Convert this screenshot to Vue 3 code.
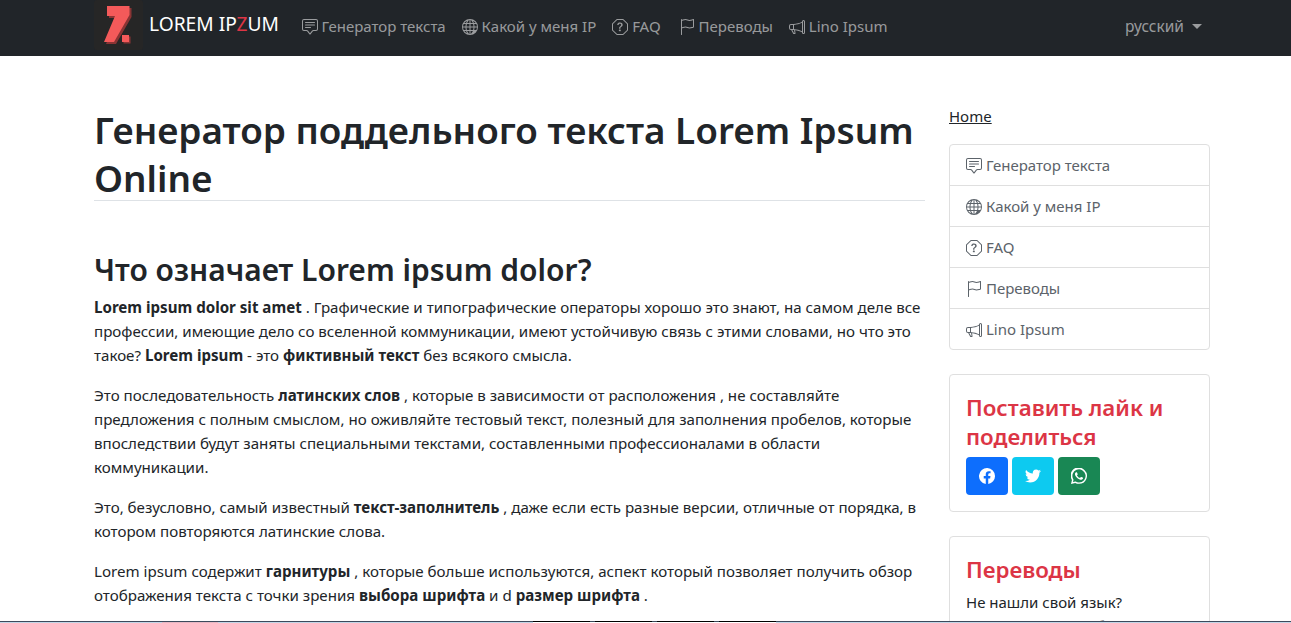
<template>
  <div class="page">
    <nav class="navbar">
      <div class="nav-in">
        <a class="brand">
          <span class="logo">
            <svg width="49" height="50" viewBox="0 0 49 50">
              <rect width="49" height="50" rx="3" fill="#262626" />
              <path d="M13 6h22.5v9L20 42H10l11-26h-8z" fill="#8a3434" transform="translate(2 2)" />
              <path d="M13 6h22.5v9L20 42H10l11-26h-8z" fill="#f45a5a" />
              <rect x="28" y="35" width="7" height="7" fill="#8a3434" transform="translate(1.5 1.5)" />
              <rect x="28" y="35" width="7" height="7" fill="#f45a5a" />
            </svg>
          </span>
          <span class="brand-text">LOREM IP<span class="z">Z</span>UM</span>
        </a>
        <ul class="menu">
          <li v-for="item in menu" :key="item.label">
            <a>
              <svg class="ico" viewBox="0 0 16 16" fill="currentColor"><path :d="item.icon" /><path v-if="item.icon2" :d="item.icon2" /></svg>
              {{ item.label }}
            </a>
          </li>
        </ul>
        <a class="lang">русский<span class="caret"></span></a>
      </div>
    </nav>

    <div class="container">
      <main class="content">
        <h1>Генератор поддельного текста Lorem Ipsum Online</h1>
        <h2>Что означает Lorem ipsum dolor?</h2>
        <p><strong>Lorem ipsum dolor sit amet</strong> . Графические и типографические операторы хорошо это знают, на самом деле все профессии, имеющие дело со вселенной коммуникации, имеют устойчивую связь с этими словами, но что это такое? <strong>Lorem ipsum</strong> - это <strong>фиктивный текст</strong> без всякого смысла.</p>
        <p>Это последовательность <strong>латинских слов</strong> , которые в зависимости от расположения , не составляйте предложения с полным смыслом, но оживляйте тестовый текст, полезный для заполнения пробелов, которые впоследствии будут заняты специальными текстами, составленными профессионалами в области коммуникации.</p>
        <p>Это, безусловно, самый известный <strong>текст-заполнитель</strong> , даже если есть разные версии, отличные от порядка, в котором повторяются латинские слова.</p>
        <p>Lorem ipsum содержит <strong>гарнитуры</strong> , которые больше используются, аспект который позволяет получить обзор отображения текста с точки зрения <strong>выбора шрифта</strong> и d <strong>размер шрифта</strong> .</p>
      </main>

      <aside class="side">
        <a class="home">Home</a>
        <ul class="list">
          <li v-for="item in menu" :key="item.label">
            <svg class="ico" viewBox="0 0 16 16" fill="currentColor"><path :d="item.icon" /><path v-if="item.icon2" :d="item.icon2" /></svg>
            {{ item.label }}
          </li>
        </ul>
        <section class="card">
          <h3>Поставить лайк и поделиться</h3>
          <div class="shares">
            <a class="btn fb">
              <svg width="16" height="16" viewBox="0 0 16 16" fill="#fff"><path d="M16 8.05A8 8 0 1 0 6.75 16v-5.62H4.72V8.05h2.03V6.3c0-2 1.2-3.12 3.02-3.12.88 0 1.8.16 1.8.16v1.97h-1c-1 0-1.31.62-1.31 1.26v1.5h2.22l-.35 2.31H9.25V16A8 8 0 0 0 16 8.05z" /></svg>
            </a>
            <a class="btn tw">
              <svg width="16" height="16" viewBox="0 0 16 16" fill="#fff"><path d="M5.03 14.5c6.04 0 9.34-5 9.34-9.34 0-.14 0-.28-.01-.42A6.7 6.7 0 0 0 16 3.04a6.5 6.5 0 0 1-1.89.52 3.3 3.3 0 0 0 1.45-1.82 6.6 6.6 0 0 1-2.08.8 3.28 3.28 0 0 0-5.6 3A9.3 9.3 0 0 1 1.11 2.1a3.28 3.28 0 0 0 1.02 4.38A3.3 3.3 0 0 1 .64 6.07v.04a3.28 3.28 0 0 0 2.63 3.22 3.3 3.3 0 0 1-1.48.06 3.29 3.29 0 0 0 3.07 2.28A6.6 6.6 0 0 1 0 13.03a9.3 9.3 0 0 0 5.03 1.47z" /></svg>
            </a>
            <a class="btn wa">
              <svg width="16" height="16" viewBox="0 0 16 16" fill="#fff"><path d="M13.6 2.33A7.93 7.93 0 0 0 .96 11.89L0 16l4.2-1.1a7.9 7.9 0 0 0 3.79.96A7.93 7.93 0 0 0 13.6 2.33zM8 14.53a6.6 6.6 0 0 1-3.36-.92l-.24-.14-2.49.65.66-2.43-.16-.25A6.6 6.6 0 1 1 8 14.53zm3.62-4.94c-.2-.1-1.17-.58-1.35-.64-.18-.07-.31-.1-.45.1-.13.2-.51.64-.62.77-.12.13-.23.15-.43.05-.2-.1-.84-.31-1.6-.99a6 6 0 0 1-1.1-1.37c-.12-.2-.01-.3.09-.4l.3-.35c.1-.12.13-.2.2-.33.06-.13.03-.25-.02-.35-.05-.1-.45-1.08-.61-1.48-.16-.39-.33-.33-.45-.34h-.38a.73.73 0 0 0-.53.25c-.18.2-.7.68-.7 1.66s.72 1.93.82 2.06c.1.13 1.4 2.14 3.4 3 .47.2.84.33 1.13.42.48.15.91.13 1.25.08.38-.06 1.17-.48 1.34-.94.16-.46.16-.86.11-.94-.05-.08-.18-.13-.38-.23z" /></svg>
            </a>
          </div>
        </section>
        <section class="card">
          <h3>Переводы</h3>
          <p class="note">Не нашли свой язык?</p>
          <p class="note">Помогите нам, добавив его</p>
        </section>
      </aside>
    </div>
    <div class="strip"></div>
  </div>
</template>

<script setup>
  const menu = [
    {
      label: 'Генератор текста',
      icon: 'M14 1a1 1 0 0 1 1 1v8a1 1 0 0 1-1 1h-2.5a2 2 0 0 0-1.6.8L8 14.333 6.1 11.8a2 2 0 0 0-1.6-.8H2a1 1 0 0 1-1-1V2a1 1 0 0 1 1-1h12zM2 0a2 2 0 0 0-2 2v8a2 2 0 0 0 2 2h2.5a1 1 0 0 1 .8.4l1.9 2.533a1 1 0 0 0 1.6 0l1.9-2.533a1 1 0 0 1 .8-.4H14a2 2 0 0 0 2-2V2a2 2 0 0 0-2-2H2z',
      icon2: 'M3 3.5a.5.5 0 0 1 .5-.5h9a.5.5 0 0 1 0 1h-9a.5.5 0 0 1-.5-.5zM3 6a.5.5 0 0 1 .5-.5h9a.5.5 0 0 1 0 1h-9A.5.5 0 0 1 3 6zm0 2.5a.5.5 0 0 1 .5-.5h5a.5.5 0 0 1 0 1h-5a.5.5 0 0 1-.5-.5z',
    },
    {
      label: 'Какой у меня IP',
      icon: 'M0 8a8 8 0 1 1 16 0A8 8 0 0 1 0 8zm7.5-6.92c-.67.2-1.34.82-1.89 1.85-.18.34-.35.71-.49 1.07H7.5V1.08zM4.09 4a9.3 9.3 0 0 1 .64-1.54 6.3 6.3 0 0 1 .4-.66A7 7 0 0 0 2.25 4h1.84zm-.58 3.5c.03-.88.14-1.72.31-2.5H1.67a6.96 6.96 0 0 0-.65 2.5h2.49zM4.85 5c-.2.76-.32 1.6-.35 2.5h3V5H4.85zM8.5 5v2.5h3c-.03-.9-.15-1.74-.35-2.5H8.5zM4.5 8.5c.03.9.15 1.74.35 2.5H7.5V8.5h-3zm4 0V11h2.65c.2-.76.32-1.6.35-2.5h-3zM5.12 12c.14.36.31.73.49 1.07.55 1.03 1.22 1.65 1.89 1.85V12H5.12zm.01 2.2a6.3 6.3 0 0 1-.4-.66A9.3 9.3 0 0 1 4.09 12H2.25a7 7 0 0 0 2.88 2.2zM3.82 11a13.6 13.6 0 0 1-.31-2.5H1.02c.06.89.28 1.73.65 2.5h2.15zm7.05 3.2c.14-.21.28-.43.4-.66.26-.48.47-1 .64-1.54h1.84a7 7 0 0 1-2.88 2.2zM8.5 12v2.92c.67-.2 1.34-.82 1.89-1.85.18-.34.35-.71.49-1.07H8.5zm3.68-1h2.15c.37-.77.59-1.61.65-2.5h-2.49a13.6 13.6 0 0 1-.31 2.5zm2.8-3.5a6.96 6.96 0 0 0-.65-2.5h-2.15c.17.78.28 1.62.31 2.5h2.49zM11.27 2.46c.26.48.47 1 .64 1.54h1.84a7 7 0 0 0-2.88-2.2c.14.21.28.43.4.66zM10.88 4a8 8 0 0 0-.49-1.07C9.84 1.9 9.17 1.28 8.5 1.08V4h2.38z',
    },
    {
      label: 'FAQ',
      icon: 'M4.54.146A.5.5 0 0 1 4.893 0h6.214a.5.5 0 0 1 .353.146l4.394 4.394a.5.5 0 0 1 .146.353v6.214a.5.5 0 0 1-.146.353l-4.394 4.394a.5.5 0 0 1-.353.146H4.893a.5.5 0 0 1-.353-.146L.146 11.46A.5.5 0 0 1 0 11.107V4.893a.5.5 0 0 1 .146-.353L4.54.146zM5.1 1 1 5.1v5.8L5.1 15h5.8l4.1-4.1V5.1L10.9 1H5.1z',
      icon2: 'M5.255 5.786a.237.237 0 0 0 .241.247h.825c.138 0 .248-.113.266-.25.09-.656.54-1.134 1.342-1.134.686 0 1.314.343 1.314 1.168 0 .635-.374.927-.965 1.371-.673.489-1.206 1.06-1.168 1.987l.003.217a.25.25 0 0 0 .25.246h.811a.25.25 0 0 0 .25-.25v-.105c0-.718.273-.927 1.01-1.486.609-.463 1.244-.977 1.244-2.056 0-1.511-1.276-2.241-2.673-2.241-1.267 0-2.655.59-2.75 2.286zm1.557 5.763c0 .533.425.927 1.01.927.609 0 1.028-.394 1.028-.927 0-.552-.42-.94-1.029-.94-.584 0-1.009.388-1.009.94z',
    },
    {
      label: 'Переводы',
      icon: 'M14.778.085A.5.5 0 0 1 15 .5V8a.5.5 0 0 1-.314.464L14.5 8l.186.464-.003.001-.006.003-.023.009a12.435 12.435 0 0 1-.397.15c-.264.095-.631.223-1.047.35-.816.252-1.879.523-2.71.523-.847 0-1.548-.28-2.158-.525l-.028-.01C7.68 8.71 7.14 8.5 6.5 8.5c-.7 0-1.638.23-2.437.477A19.626 19.626 0 0 0 3 9.342V15.5a.5.5 0 0 1-1 0V.5a.5.5 0 0 1 1 0v.282c.226-.079.496-.17.79-.26C4.606.272 5.67 0 6.5 0c.84 0 1.524.277 2.121.519l.043.018C9.286.788 9.828 1 10.5 1c.7 0 1.638-.23 2.437-.477a19.587 19.587 0 0 0 1.349-.476l.019-.007.004-.002h.001M14 1.221c-.22.078-.48.167-.766.255-.81.252-1.872.523-2.734.523-.886 0-1.592-.286-2.203-.534l-.008-.003C7.662 1.21 7.139 1 6.5 1c-.669 0-1.606.229-2.415.478A21.294 21.294 0 0 0 3 1.845v6.433c.22-.078.48-.167.766-.255C4.576 7.77 5.638 7.5 6.5 7.5c.847 0 1.548.28 2.158.525l.028.01C9.32 8.29 9.86 8.5 10.5 8.5c.668 0 1.606-.229 2.415-.478A21.317 21.317 0 0 0 14 7.655V1.222z',
    },
    {
      label: 'Lino Ipsum',
      icon: 'M13 2.5a1.5 1.5 0 0 1 3 0v11a1.5 1.5 0 0 1-3 0v-.214c-2.162-1.241-4.49-1.843-6.912-2.083l.405 2.712A1 1 0 0 1 5.51 15.1h-.548a1 1 0 0 1-.916-.599l-1.85-3.49a68.14 68.14 0 0 0-.202-.003A2.014 2.014 0 0 1 0 9V7a2.02 2.02 0 0 1 1.992-2.013 74.663 74.663 0 0 0 2.483-.075c3.043-.154 6.148-.849 8.525-2.199V2.5zm1 0v11a.5.5 0 0 0 1 0v-11a.5.5 0 0 0-1 0zm-1 1.35c-2.344 1.205-5.209 1.842-8 2.033v4.233c.18.01.359.022.537.036 2.568.189 5.093.744 7.463 1.993V3.85zm-9 6.215v-4.13a95.09 95.09 0 0 1-1.992.052A1.02 1.02 0 0 0 1 7v2c0 .55.448 1.002 1.006 1.009A60.49 60.49 0 0 1 4 10.065zm-.657.975 1.609 3.037.01.024h.548l-.002-.014-.443-2.966a68.019 68.019 0 0 0-1.722-.082z',
    },
  ]
</script>

<style>
  html, body {
    margin: 0;
    height: 623px;
    overflow: hidden;
    background: #fff;
  }
</style>

<style scoped>
  .page {
    font-family: "Noto Sans", "Open Sans", sans-serif;
    color: #212529;
    font-size: 16px;
    line-height: 1.5;
    height: 623px;
    overflow: hidden;
    position: relative;
  }

  .navbar {
    background: #212529;
    height: 56px;
    overflow: hidden;
  }

  .nav-in {
    width: 1116px;
    margin-left: 94px;
    height: 56px;
    display: flex;
    align-items: center;
  }

  .brand {
    display: flex;
    align-items: center;
    color: #fff;
    margin-right: 14.5px;
  }

  .logo {
    display: block;
    width: 48px;
    height: 50px;
    margin-right: 7px;
    margin-top: -6px;
  }

  .brand-text {
    font-size: 19.2px;
    position: relative;
    top: -4px;
  }

  .z {
    color: #dc3545;
  }

  .menu {
    display: flex;
    list-style: none;
    margin: 0 0 4px;
    padding: 0;
    flex: 1;
  }

  .menu a {
    display: block;
    padding: 0 8px;
    color: rgba(255, 255, 255, 0.55);
    font-size: 15px;
    white-space: nowrap;
  }

  .menu li:nth-child(3) a {
    padding-right: 10px;
  }

  .ico {
    width: 16px;
    height: 16px;
    vertical-align: -3px;
  }

  .lang {
    color: rgba(255, 255, 255, 0.55);
    font-size: 15.5px;
    padding-right: 8px;
    margin-bottom: 2px;
  }

  .caret {
    display: inline-block;
    margin-left: 8px;
    vertical-align: 3px;
    border-top: 5px solid;
    border-left: 5px solid transparent;
    border-right: 5px solid transparent;
  }

  .container {
    width: 1116px;
    margin: 48px 0 0 94px;
    display: grid;
    grid-template-columns: 831px 261px;
    column-gap: 24px;
  }

  h1 {
    font-size: 36.9px;
    font-weight: 600;
    line-height: 48px;
    padding-top: 2px;
    margin: 0 0 51px;
    height: 94px;
    border-bottom: 1px solid #dee2e6;
  }

  h2 {
    font-size: 30px;
    font-weight: 600;
    line-height: 36px;
    margin: 0 0 7px;
  }

  .content p {
    margin: 0 0 16px;
    font-size: 15.12px;
    line-height: 24px;
  }

  strong {
    font-weight: 700;
  }

  .home {
    display: block;
    color: #212529;
    text-decoration: underline;
    font-size: 15px;
    line-height: 24px;
    margin-bottom: 16px;
  }

  .list {
    list-style: none;
    margin: 0 0 24px;
    padding: 0;
    border: 1px solid #dfdfdf;
    border-radius: 4px;
  }

  .list li {
    padding: 9px 16px 7px;
    height: 41px;
    box-sizing: border-box;
    color: #5c636a;
    font-size: 15px;
    border-bottom: 1px solid #dfdfdf;
    white-space: nowrap;
  }

  .list li:last-child {
    border-bottom: 0;
    height: 40px;
  }

  .card {
    border: 1px solid #dfdfdf;
    border-radius: 4px;
    padding: 16px;
    margin-bottom: 24px;
  }

  h3 {
    font-size: 22.3px;
    font-weight: 600;
    line-height: 29px;
    color: #dc3545;
    margin: 2px 0 6px;
  }

  .shares {
    display: flex;
    gap: 4px;
  }

  .btn {
    width: 42px;
    height: 38px;
    border-radius: 4px;
    display: flex;
    align-items: center;
    justify-content: center;
  }

  .fb { background: #0d6efd; }
  .tw { background: #0dcaf0; }
  .wa { background: #198754; }

  .note {
    margin: 0;
    font-size: 15px;
    line-height: 24px;
  }

  .strip {
    position: absolute;
    left: 0;
    right: 0;
    bottom: 0;
    height: 2px;
    background:
      linear-gradient(90deg, transparent 533px, #000 533px, #000 590px, transparent 590px, transparent 595px, #000 595px, #000 652px, transparent 652px, transparent 657px, #000 657px, #000 714px, transparent 714px, transparent 719px, #000 719px, #000 776px, transparent 776px) top / 100% 1px no-repeat,
      linear-gradient(#3c4a5c, #3c4a5c) top / 100% 1px no-repeat,
      linear-gradient(90deg, #c3d6e6 162px, #e6b8c4 162px, #e6b8c4 218px, #c3d6e6 218px, #c3d6e6 533px, #fff 533px, #fff 776px, #c3d6e6 776px) bottom / 100% 1px no-repeat;
  }
</style>
